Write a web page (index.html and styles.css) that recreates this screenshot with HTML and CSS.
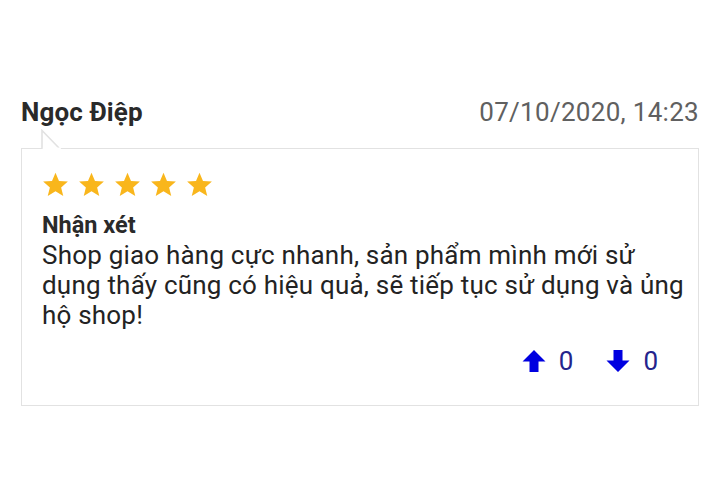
FILE: index.html
```html
<!DOCTYPE html>
<html lang="vi">
<head>
<meta charset="utf-8">
<link rel="stylesheet" href="styles.css">
</head>
<body>
<div class="reviews">
  <div class="review">
    <div class="review-head">
      <span class="author">Ngọc Điệp</span>
      <span class="date">07/10/2020, 14:23</span>
    </div>
    <div class="bubble">
      <svg class="notch" width="22" height="20" viewBox="0 0 22 20">
        <path d="M1 20 L1 1.5 L18 19" fill="#fff" stroke="#e2e2e2" stroke-width="1.6"/>
        <rect x="1.8" y="18.6" width="18" height="2" fill="#fff"/>
      </svg>
      <div class="stars">
        <svg class="star" viewBox="0 0 24 24"><path d="M12 1.5l3.1 7.3 7.9.6-6 5.2 1.9 7.7L12 18.1l-6.9 4.2L7 14.6 1 9.4l7.9-.6z"/></svg>
        <svg class="star" viewBox="0 0 24 24"><path d="M12 1.5l3.1 7.3 7.9.6-6 5.2 1.9 7.7L12 18.1l-6.9 4.2L7 14.6 1 9.4l7.9-.6z"/></svg>
        <svg class="star" viewBox="0 0 24 24"><path d="M12 1.5l3.1 7.3 7.9.6-6 5.2 1.9 7.7L12 18.1l-6.9 4.2L7 14.6 1 9.4l7.9-.6z"/></svg>
        <svg class="star" viewBox="0 0 24 24"><path d="M12 1.5l3.1 7.3 7.9.6-6 5.2 1.9 7.7L12 18.1l-6.9 4.2L7 14.6 1 9.4l7.9-.6z"/></svg>
        <svg class="star" viewBox="0 0 24 24"><path d="M12 1.5l3.1 7.3 7.9.6-6 5.2 1.9 7.7L12 18.1l-6.9 4.2L7 14.6 1 9.4l7.9-.6z"/></svg>
      </div>
      <div class="label">Nhận xét</div>
      <p class="text">Shop giao hàng cực nhanh, sản phẩm mình mới sử dụng thấy cũng có hiệu quả, sẽ tiếp tục sử dụng và ủng hộ shop!</p>
      <div class="votes">
        <span class="vote">
          <svg class="arrow" viewBox="0 0 24 24"><path d="M12 1 L23.5 12.5 L16.5 12.5 L16.5 23 L7.5 23 L7.5 12.5 L0.5 12.5 Z"/></svg>
          <span class="count">0</span>
        </span>
        <span class="vote">
          <svg class="arrow" viewBox="0 0 24 24"><path d="M12 23 L23.5 11.5 L16.5 11.5 L16.5 1 L7.5 1 L7.5 11.5 L0.5 11.5 Z"/></svg>
          <span class="count">0</span>
        </span>
      </div>
    </div>
  </div>
</div>
</body>
</html>
```

FILE: styles.css
```css
html, body {
  margin: 0;
  padding: 0;
  background: #fff;
}
body {
  font-family: Roboto, "Noto Sans", sans-serif;
  color: #222;
}
.reviews {
  padding: 97px 21px 0 21px;
}
.review-head {
  display: flex;
  justify-content: space-between;
  align-items: center;
  height: 30px;
}
.author {
  font-size: 26px;
  font-weight: 700;
  color: #2a2a2a;
  letter-spacing: 0.1px;
}
.date {
  font-size: 26px;
  color: #606060;
  letter-spacing: 0.3px;
}
.bubble {
  position: relative;
  margin-top: 21px;
  border: 1.6px solid #e2e2e2;
  padding: 22px 10px 30px 20px;
}
.notch {
  position: absolute;
  left: 19px;
  top: -19.6px;
  display: block;
}
.stars {
  display: flex;
  gap: 9px;
  height: 26px;
}
.star {
  width: 27px;
  height: 27px;
  fill: #f9b61c;
}
.label {
  margin-top: 14px;
  font-size: 23.5px;
  font-weight: 700;
  line-height: 28px;
  color: #2a2a2a;
}
.text {
  margin: 1px 0 0 0;
  font-size: 26px;
  line-height: 30px;
  letter-spacing: 0.2px;
  color: #232323;
}
.votes {
  display: flex;
  justify-content: flex-end;
  gap: 33px;
  margin-top: 17px;
  padding-right: 30px;
  height: 28px;
  align-items: center;
}
.vote {
  display: flex;
  align-items: center;
  gap: 13px;
}
.arrow {
  width: 24px;
  height: 24px;
  fill: #0000e0;
}
.count {
  font-size: 26px;
  color: #24248c;
}
```
